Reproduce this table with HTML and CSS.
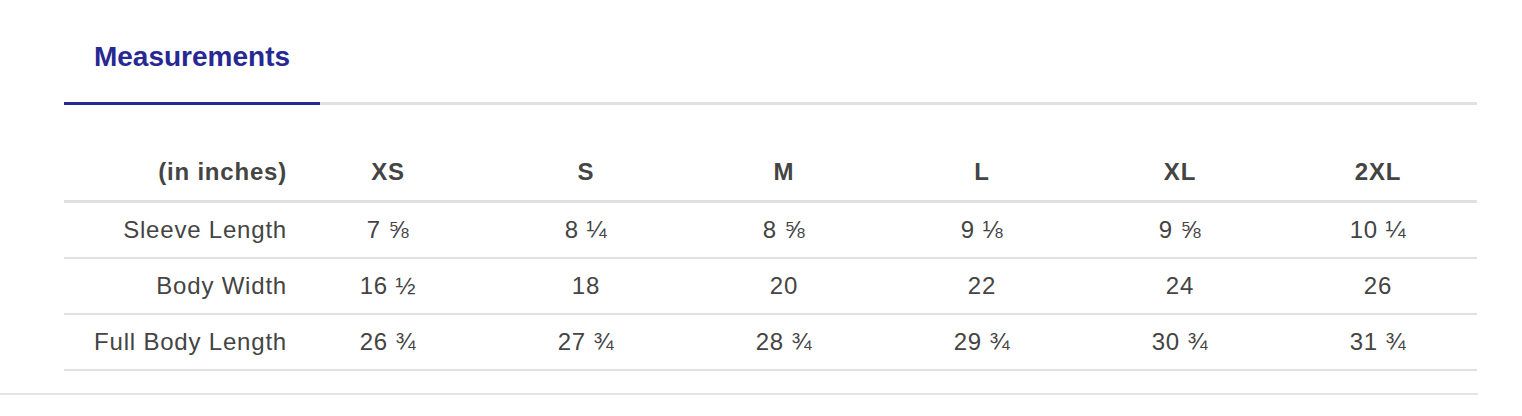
FILE: index.html
```html
<!DOCTYPE html>
<html>
<head>
<meta charset="utf-8">
<link rel="stylesheet" href="styles.css">
</head>
<body>
<div class="wrap">
  <div class="tabs">
    <div class="tab active">Measurements</div>
  </div>
  <table class="sizes">
    <colgroup>
      <col class="c-label">
      <col class="c-size"><col class="c-size"><col class="c-size">
      <col class="c-size"><col class="c-size"><col class="c-size">
    </colgroup>
    <thead>
      <tr>
        <th class="label">(in inches)</th>
        <th>XS</th><th>S</th><th>M</th><th>L</th><th>XL</th><th>2XL</th>
      </tr>
    </thead>
    <tbody>
      <tr>
        <td class="label">Sleeve Length</td>
        <td>7 ⅝</td><td>8 ¼</td><td>8 ⅝</td><td>9 ⅛</td><td>9 ⅝</td><td>10 ¼</td>
      </tr>
      <tr>
        <td class="label">Body Width</td>
        <td>16 ½</td><td>18</td><td>20</td><td>22</td><td>24</td><td>26</td>
      </tr>
      <tr>
        <td class="label">Full Body Length</td>
        <td>26 ¾</td><td>27 ¾</td><td>28 ¾</td><td>29 ¾</td><td>30 ¾</td><td>31 ¾</td>
      </tr>
    </tbody>
  </table>
</div>
<div class="bottom-rule"></div>
</body>
</html>
```
FILE: styles.css
```css
html, body {
  margin: 0;
  padding: 0;
  background: #fff;
}
body {
  font-family: "Liberation Sans", Arial, Helvetica, sans-serif;
  color: #444;
}
.wrap {
  width: 1413px;
  margin-left: 64px;
}
.tabs {
  display: flex;
  border-bottom: 3px solid #e0e0e0;
}
.tab {
  width: 256px;
  text-align: center;
  font-size: 28px;
  font-weight: bold;
  line-height: 32px;
  color: #282892;
  padding: 41px 0 29px;
}
.tab.active {
  border-bottom: 3px solid #282892;
  margin-bottom: -3px;
}
.sizes {
  width: 1413px;
  margin-top: 25px;
  border-collapse: collapse;
  table-layout: fixed;
}
.c-label { width: 225px; }
.c-size { width: 198px; }
.sizes th, .sizes td {
  text-align: center;
  font-size: 24px;
  line-height: 28px;
  letter-spacing: 0.8px;
  padding: 0;
}
.sizes th {
  font-weight: bold;
  color: #444;
  padding: 28px 0 14px;
  border-bottom: 3px solid #e0e0e0;
}
.sizes td {
  padding: 13px 0;
  border-bottom: 2px solid #e0e0e0;
}
.sizes .label {
  text-align: right;
  padding-right: 2px;
}
.bottom-rule {
  width: 1478px;
  margin-top: 22px;
  border-top: 2px solid #e5e5e5;
}
```
